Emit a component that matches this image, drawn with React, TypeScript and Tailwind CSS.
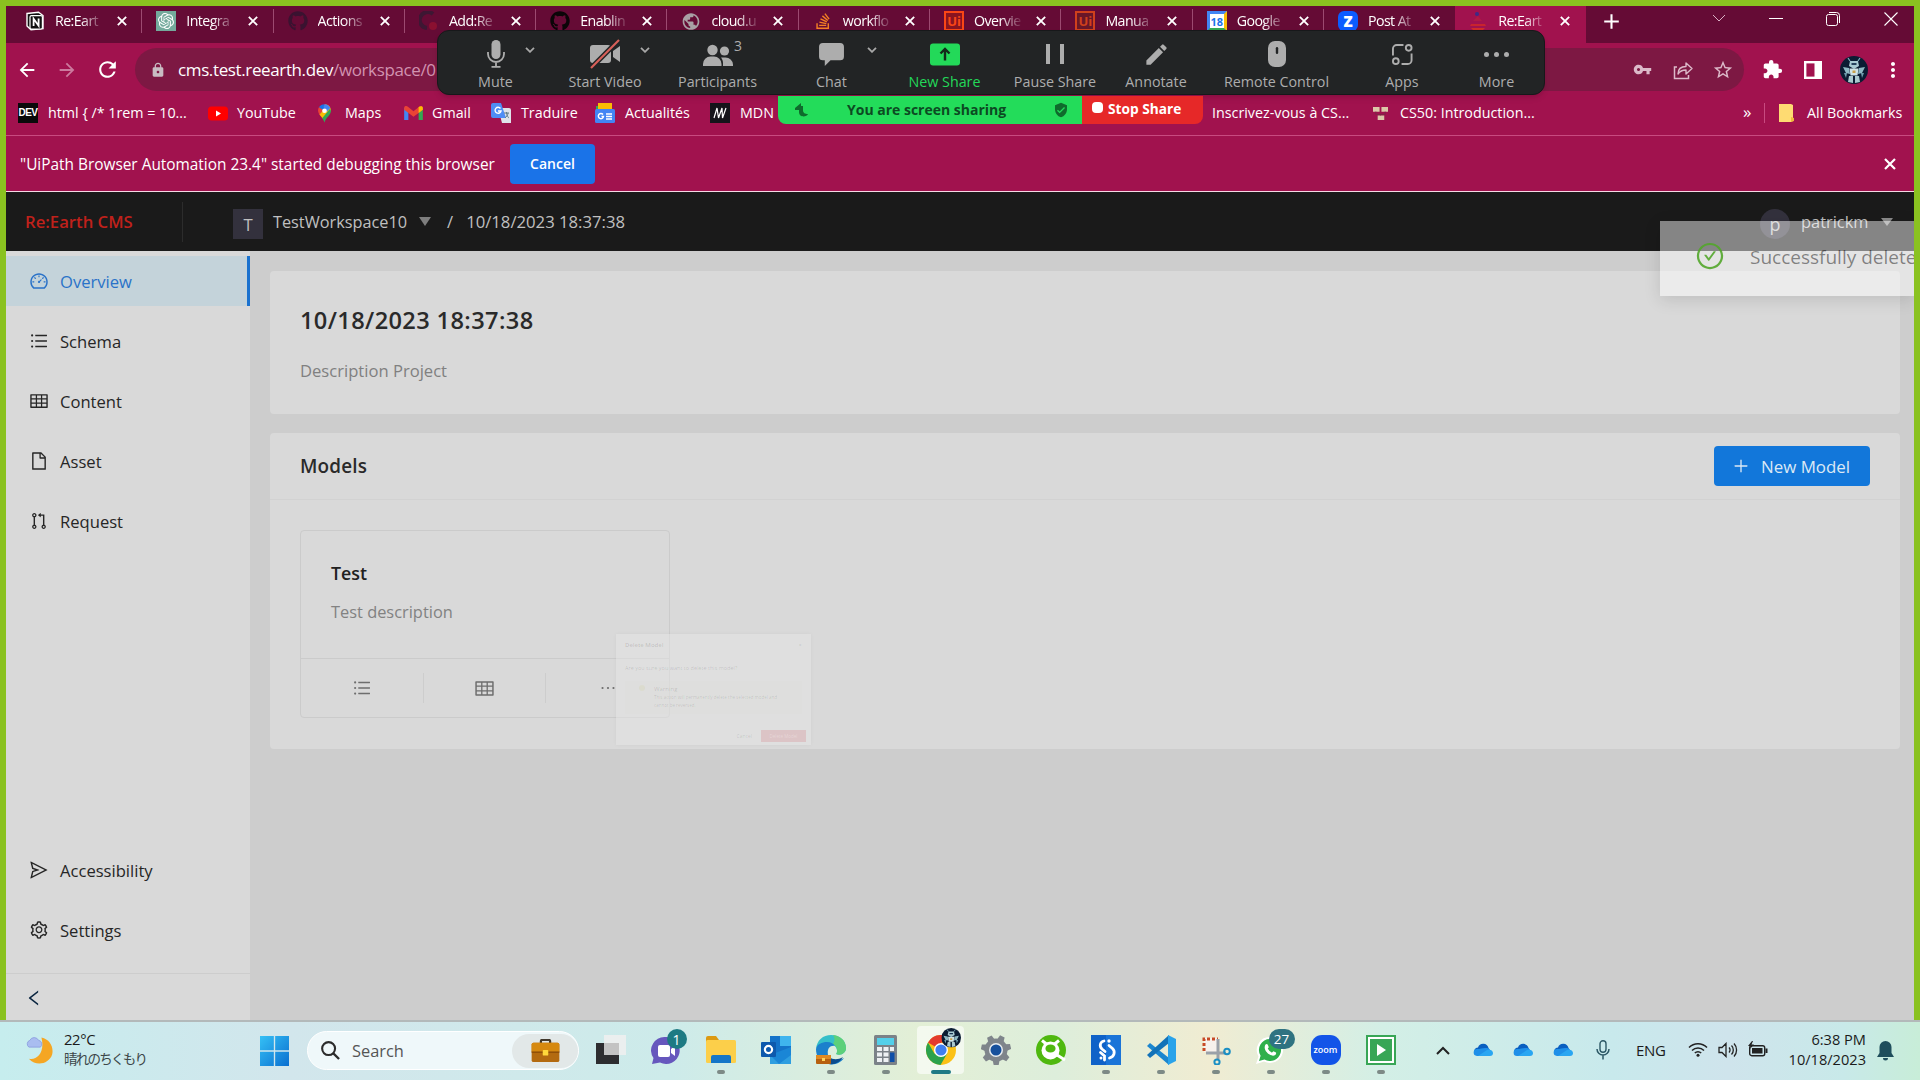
import React from "react";
import {
  AiOutlineDashboard,
  AiOutlineUnorderedList,
  AiOutlineTable,
  AiOutlineFile,
  AiOutlinePullRequest,
  AiOutlineSend,
  AiOutlineSetting,
  AiOutlinePlus,
  AiOutlineLeft,
  AiOutlineEllipsis,
  AiOutlineCheckCircle,
} from "react-icons/ai";
import { FaGithub, FaStackOverflow } from "react-icons/fa";
import { SiOpenai } from "react-icons/si";
import {
  MdArrowBack,
  MdArrowForward,
  MdRefresh,
  MdLock,
  MdVpnKey,
  MdExtension,
  MdMoreVert,
  MdStarBorder,
  MdPublic,
  MdAdd,
  MdEdit,
  MdVerifiedUser,
} from "react-icons/md";

/* ---------- tab strip ---------- */

const Cross = ({ className }: { className: string }) => (
  <svg viewBox="0 0 12 12" className={"shrink-0 " + className}>
    <path d="M1 1l10 10M11 1 1 11" stroke="#fff" strokeWidth="2.2" />
  </svg>
);

const NotionMark = () => (
  <svg viewBox="0 0 20 20" className="size-5">
    <path d="M2 2.5 13.5 1.2 18 4.5v13L6 18.8 2 15z" fill="#111" stroke="#fff" strokeWidth="1.4" />
    <rect x="5" y="4.6" width="12.4" height="13.4" rx="1.5" fill="#111" stroke="#fff" strokeWidth="1.2" />
    <path d="M8.6 15V7.8l5 7V7.6" fill="none" stroke="#fff" strokeWidth="1.8" />
  </svg>
);

const UiPathMark = ({ dim = false }: { dim?: boolean }) => (
  <div
    className={
      dim
        ? "flex size-5 items-center justify-center border-2 border-[#d0401c] bg-[#6a1628] text-[13px] leading-none font-bold text-[#d0401c]"
        : "flex size-5 items-center justify-center border-2 border-[#fa4616] bg-[#8b1420] text-[13px] leading-none font-bold text-[#fa4616]"
    }
  >
    Ui
  </div>
);

const CalendarMark = () => (
  <div className="flex size-5 items-center justify-center border-x-[3px] border-y-[3px] border-t-[#4285f4] border-r-[#fbbc04] border-b-[#34a853] border-l-[#4285f4] bg-white text-[11px] leading-none font-bold text-[#1a73e8]">
    18
  </div>
);

const EarthMark = () => (
  <svg viewBox="0 0 20 20" className="size-5">
    <circle cx="9" cy="3" r="2" fill="#3d2a86" />
    <path d="M5 10 10 5l4 5z" fill="#b01a45" />
    <path d="M3 13h14l1 2H2z" fill="#c8242e" />
    <path d="M3 17h14l-2 2H5z" fill="#d02c28" />
  </svg>
);

const tabs: { title: string; icon: React.ReactNode }[] = [
  { title: "Re:Eart", icon: <NotionMark /> },
  {
    title: "Integra",
    icon: (
      <div className="flex size-5 items-center justify-center bg-[#74aa9c] text-white">
        <SiOpenai size={16} />
      </div>
    ),
  },
  { title: "Actions", icon: <FaGithub size={20} color="#3a1230" /> },
  {
    title: "Add:Re",
    icon: (
      <svg viewBox="0 0 20 20" className="size-5">
        <path d="M14 3A8 8 0 1 0 8 17" fill="none" stroke="#3d1733" strokeWidth="4" />
        <circle cx="14" cy="15" r="4" fill="#8a1030" />
      </svg>
    ),
  },
  { title: "Enablin", icon: <FaGithub size={20} color="#0b0508" /> },
  { title: "cloud.u", icon: <MdPublic size={21} color="#a9a0a5" /> },
  { title: "workflo", icon: <FaStackOverflow size={18} color="#f48024" /> },
  { title: "Overvie", icon: <UiPathMark /> },
  { title: "Manua", icon: <UiPathMark dim /> },
  { title: "Google", icon: <CalendarMark /> },
  {
    title: "Post At",
    icon: (
      <div className="flex size-5 items-center justify-center rounded-md bg-[#0b5cff] text-[15px] leading-none font-extrabold text-white">
        Z
      </div>
    ),
  },
  { title: "Re:Eart", icon: <EarthMark /> },
];

function TabStrip() {
  return (
    <div className="flex h-[37px] bg-[#650b35]">
      <div className="w-[5px]" />
      {tabs.map((t, i) => (
        <div
          key={i}
          className={
            i === 11
              ? "flex h-[37px] w-[131px] shrink-0 items-center bg-[#a1124e] pb-[7px] pl-[13px]"
              : "flex h-[37px] w-[131.3px] shrink-0 items-center pb-[7px] pl-[14px]"
          }
        >
          <div className="flex w-5 shrink-0 justify-center">{t.icon}</div>
          <div className="ml-[10px] w-[47px] shrink-0 text-[14.200px] tracking-[-0.04em] whitespace-nowrap text-white [mask-image:linear-gradient(to_right,black_55%,rgba(0,0,0,0.1))]">
            {t.title}
          </div>
          <Cross className="ml-[15px] size-[10px]" />
          {i < 10 && <div className="ml-auto h-6 w-px bg-[#9c4a70]" />}
        </div>
      ))}
      <div className="flex grow items-start rounded-bl-lg bg-[#650b35] text-white">
        <MdAdd size={25} className="mt-[3px] ml-[13px]" />
        <svg viewBox="0 0 12 12" className="mt-[6px] ml-[88px] h-3 w-[14px]">
          <path d="M0 3l6 6 6-6" fill="none" stroke="#d9b0c4" strokeWidth="1" />
        </svg>
        <div className="mt-3 ml-[43px] h-px w-[14px] bg-white" />
        <svg viewBox="0 0 14 14" className="mt-[6px] ml-[43px] size-[14px]">
          <rect x="0.5" y="2.5" width="11" height="11" rx="2" fill="none" stroke="#fff" />
          <path d="M3 .5h7.500a3 3 0 0 1 3 3V11" fill="none" stroke="#fff" />
        </svg>
        <svg viewBox="0 0 14 14" className="mt-[6px] ml-[44px] size-[14px]">
          <path d="M.5.5l13 13M13.5.5l-13 13" stroke="#fff" strokeWidth="1.1" />
        </svg>
      </div>
    </div>
  );
}

/* ---------- address row ---------- */

const AvatarBot = () => (
  <svg viewBox="0 0 28 28" className="size-7">
    <circle cx="14" cy="14" r="14" fill="#0b1c33" />
    <path d="M10 5h8l1 5-5 3-5-3z" fill="#a9cbd3" />
    <path d="M3 11l6 1 1 6-4-1zM25 11l-6 1-1 6 4-1z" fill="#8fb9c4" />
    <path d="M4 17l3 0-1 5zM24 17l-3 0 1 5z" fill="#6f9cab" />
    <path d="M9.500 12.500h9l-1 7h-7z" fill="#cfe3e6" />
    <path d="M9 20l4 0v7l-5-1zM19 20l-4 0v7l5-1z" fill="#a9c8ce" />
    <path d="M12.500 14.500h3v2.500h-3z" fill="#c8a04a" />
    <path d="M11.500 8h5" stroke="#17314f" strokeWidth="1.800" />
    <path d="M10 5 8 2M18 5l2-3" stroke="#7fb0c0" strokeWidth="1.200" />
  </svg>
);

function AddressRow() {
  return (
    <div className="flex h-[53px] items-center bg-[#a1124e] text-white">
      <MdArrowBack size={22} className="ml-[10px]" />
      <MdArrowForward size={22} className="ml-[18px] text-[#cc7a9e]" />
      <MdRefresh size={25} className="ml-[17px]" />
      <div className="ml-[15px] flex h-[43px] w-[1609px] items-center rounded-full bg-[#7d1843]">
        <MdLock size={16} className="ml-[15px] text-[#c9bcc3]" />
        <div className="ml-3 text-[17px] tracking-[-0.022em] whitespace-nowrap">
          cms.test.reearth.dev<span className="text-[#d193b0]">/workspace/0</span>
        </div>
        <div className="ml-auto flex items-center text-[#dcb9c9]">
          <MdVpnKey size={19} />
          <svg viewBox="0 0 20 20" className="ml-[21px] size-5">
            <path d="M4 7H1.500v11.500h14V15" fill="none" stroke="currentColor" strokeWidth="1.500" />
            <path d="M5 14c0-5 3-7.500 8-7.500V3l6 5.500-6 5.500v-4c-4 0-6 1-8 4z" fill="none" stroke="currentColor" strokeWidth="1.400" strokeLinejoin="round" />
          </svg>
          <MdStarBorder size={22} className="mr-[10px] ml-[19px]" />
        </div>
      </div>
      <MdExtension size={21} className="ml-[18px]" />
      <svg viewBox="0 0 18 18" className="ml-[21px] size-[18px]">
        <rect x="1.200" y="1.200" width="15.600" height="15.600" fill="none" stroke="#fff" strokeWidth="2.400" />
        <rect x="10.500" y="1" width="6.500" height="16" fill="#fff" />
      </svg>
      <div className="ml-[18px]">
        <AvatarBot />
      </div>
      <MdMoreVert size={24} className="ml-[13px]" />
    </div>
  );
}

/* ---------- bookmarks ---------- */

const PinMark = () => (
  <svg viewBox="0 0 14 20" className="h-[19px] w-[13px]">
    <path d="M7 0a7 7 0 0 0-6 3.300L7 9z" fill="#1a73e8" />
    <path d="M1 3.300C-.5 6 0 9 1.500 11L6 6.500z" fill="#ea4335" />
    <path d="M7 0c4 0 7 3 7 7l-9 8.500L1.500 11 9 3z" fill="#fbbc04" />
    <path d="M14 7c0 5-6 7-7 13-.5-2-1.300-3.500-2.500-5L13 5z" fill="#34a853" />
    <path d="M7 0c3 0 5 1.500 6.300 4L9.500 8 6 3z" fill="#4285f4" />
    <circle cx="7" cy="7" r="2.500" fill="#fff" />
  </svg>
);

const GmailMark = () => (
  <svg viewBox="0 0 20 15" className="h-[14px] w-[19px]">
    <path d="M0 2v13h4.500V5z" fill="#4285f4" />
    <path d="M20 2v13h-4.500V5z" fill="#34a853" />
    <path d="M0 2C0 0 2.500-.5 4 .8l6 4.700 6-4.700C17.500-.5 20 0 20 2v2l-10 7.500L0 4z" fill="#ea4335" />
    <path d="M15.500 1.200C17.500-.5 20 0 20 2v2l-4.500 3.400z" fill="#fbbc04" />
  </svg>
);

const TranslateMark = () => (
  <svg viewBox="0 0 20 20" className="size-5">
    <path d="M7 5h11a2 2 0 0 1 2 2v13h-9z" fill="#dfe3ea" />
    <path d="M2 0h8l5 15H2a2 2 0 0 1-2-2V2a2 2 0 0 1 2-2z" fill="#4f8df5" />
    <path d="M9.500 5.500A3 3 0 1 0 10 8H7" fill="none" stroke="#fff" strokeWidth="1.400" />
    <path d="M13 10h5M15.500 9v1c0 2 2 5 2.500 5M17 10c0 2-2 4-3 5" fill="none" stroke="#607d8b" />
  </svg>
);

const NewsMark = () => (
  <svg viewBox="0 0 20 20" className="size-5">
    <path d="M1 3h14l3 4H1z" fill="#34a853" />
    <path d="M3 0h14v9H3z" fill="#fbbc04" />
    <rect y="6" width="20" height="14" rx="1.500" fill="#4285f4" />
    <path d="M8 11.500A2.600 2.600 0 1 0 8.500 13.500H6.500" fill="none" stroke="#fff" strokeWidth="1.400" />
    <path d="M11 11h6M11 13.500h6M11 16h6" stroke="#fff" strokeWidth="1.300" />
  </svg>
);

function Bookmark({ icon, label, className }: { icon: React.ReactNode; label: string; className: string }) {
  return (
    <div className={"flex shrink-0 items-center whitespace-nowrap " + className}>
      {icon}
      <span>{label}</span>
    </div>
  );
}

function BookmarkBar() {
  return (
    <div className="flex h-[40px] items-center border-b border-[#c84a80] bg-[#a1124e] pb-[5px] text-[14.300px] text-white">
      <Bookmark
        className="ml-3 w-[190px] gap-[10px]"
        icon={
          <div className="flex h-[20px] w-5 items-center justify-center bg-[#0a0a0a] font-['Liberation_Sans'] text-[10px] leading-none font-bold tracking-tighter">
            DEV
          </div>
        }
        label="html { /* 1rem = 10..."
      />
      <Bookmark
        className="w-[110px] gap-[9px]"
        icon={
          <svg viewBox="0 0 20 14" className="h-[15px] w-5">
            <rect width="20" height="14" rx="3.500" fill="#f00" />
            <path d="M8 4v6l5-3z" fill="#fff" />
          </svg>
        }
        label="YouTube"
      />
      <Bookmark className="w-[86px] gap-[14px]" icon={<PinMark />} label="Maps" />
      <Bookmark className="w-[87px] gap-[9px]" icon={<GmailMark />} label="Gmail" />
      <Bookmark className="w-[104px] gap-[10px]" icon={<TranslateMark />} label="Traduire" />
      <Bookmark className="w-[115px] gap-[10px]" icon={<NewsMark />} label="Actualités" />
      <Bookmark
        className="w-[502px] gap-[10px]"
        icon={
          <svg viewBox="0 0 20 20" className="size-5">
            <rect width="20" height="20" fill="#15141a" />
            <path d="M4 15 7 5l1.500 10L12 5l.5 10L16 5" fill="none" stroke="#fff" strokeWidth="1.200" />
          </svg>
        }
        label="MDN"
      />
      <Bookmark className="w-[161px]" icon={null} label="Inscrivez-vous à CS..." />
      <Bookmark
        className="w-[370px] gap-[12px]"
        icon={
          <svg viewBox="0 0 16 16" className="size-[15px]">
            <path d="M0 1h7v5H0zM9 1h7v5H9zM5 10h7v5H5z" fill="#dcc8a8" />
            <path d="M3 6v3h10V6M8 9v1" fill="none" stroke="#7b2a45" />
          </svg>
        }
        label="CS50: Introduction..."
      />
      <span className="w-[21px] pb-[3px] text-[17px]">»</span>
      <div className="h-5 w-px bg-[#c84a80]" />
      <Bookmark
        className="ml-[14px] gap-[13px]"
        icon={
          <svg viewBox="0 0 15 18" className="h-[18px] w-[15px]">
            <path d="M0 0h12v0l2 1v16l-2 1H0z" fill="#fedb72" />
            <path d="M12 13l3 1v3l-3 1z" fill="#f0b93c" />
          </svg>
        }
        label="All Bookmarks"
      />
    </div>
  );
}

function InfoBar() {
  return (
    <div className="flex h-[56px] items-center border-b border-[#f4d9e4] bg-[#a1124e] text-white">
      <span className="mt-[2px] ml-[14px] w-[490px] text-[15.400px] whitespace-nowrap">
        "UiPath Browser Automation 23.4" started debugging this browser
      </span>
      <div className="flex h-10 w-[85px] items-center justify-center rounded bg-[#1a73e8] text-[14px] font-semibold">
        Cancel
      </div>
      <Cross className="mr-[18px] ml-auto size-[12px]" />
    </div>
  );
}

/* ---------- conference toolbar ---------- */

const Caret = ({ className }: { className: string }) => (
  <svg viewBox="0 0 10 6" className={"absolute top-[16px] h-[6px] w-[10px] " + className}>
    <path d="M1 .8l4 4 4-4" fill="none" stroke="#a8a8a8" strokeWidth="1.800" />
  </svg>
);

const g = "#adadad";

function MeetingItem({
  label,
  icon,
  className,
  children,
}: {
  label: string;
  icon: React.ReactNode;
  className: string;
  children?: React.ReactNode;
}) {
  return (
    <div className={"relative flex shrink-0 flex-col items-center whitespace-nowrap " + className}>
      <div className="flex h-[46px] items-center justify-center">{icon}</div>
      <div className="-mt-[5px] text-[14.300px] leading-5">{label}</div>
      {children}
    </div>
  );
}

function MeetingToolbar() {
  return (
    <div className="absolute top-[30px] left-[437px] flex h-[65px] w-[1108px] rounded-xl border border-[#17181a] bg-[#222425] text-[#adadad] shadow-md">
      <MeetingItem
        className="w-[115px]"
        label="Mute"
        icon={
          <svg viewBox="0 0 18 28" className="h-7 w-[18px]">
            <rect x="4.500" width="9" height="19" rx="4.500" fill={g} />
            <path d="M1 12v2a8 8 0 0 0 16 0v-2M9 22v4M4.500 26.800h9" fill="none" stroke={g} strokeWidth="1.800" />
          </svg>
        }
      >
        <Caret className="left-[87px]" />
      </MeetingItem>
      <MeetingItem
        className="w-[104px]"
        label="Start Video"
        icon={
          <svg viewBox="0 0 32 30" className="h-[30px] w-8">
            <rect x="1" y="6" width="21" height="18" rx="3" fill={g} />
            <path d="M24 12l7-5v16l-7-5z" fill={g} />
            <path d="M2 29 30 1" stroke="#222425" strokeWidth="5" />
            <path d="M2 29 30 1" stroke="#d8605a" strokeWidth="2.200" />
          </svg>
        }
      >
        <Caret className="left-[87px]" />
      </MeetingItem>
      <MeetingItem
        className="w-[121px]"
        label="Participants"
        icon={
          <svg viewBox="0 0 30 23" className="mt-[2px] h-[23px] w-[30px]">
            <circle cx="9.500" cy="6" r="5.200" fill={g} />
            <path d="M0 22v-2a7.500 7.500 0 0 1 7.500-7.500h3.500a7.500 7.500 0 0 1 7.500 7.500v2z" fill={g} />
            <circle cx="21.500" cy="7" r="4.600" fill={g} />
            <path d="M20 22v-3c0-2-.8-4-2-5.500h4.500a7.500 7.500 0 0 1 7.500 7v1.500z" fill={g} />
          </svg>
        }
      >
        <span className="absolute top-[4px] left-[77px] text-[14px]">3</span>
      </MeetingItem>
      <MeetingItem
        className="w-[107px]"
        label="Chat"
        icon={
          <svg viewBox="0 0 26 24" className="h-[23px] w-[25px]">
            <path d="M4 0h18a4 4 0 0 1 4 4v10a4 4 0 0 1-4 4H12l-6 6v-6H4a4 4 0 0 1-4-4V4a4 4 0 0 1 4-4z" fill={g} />
          </svg>
        }
      >
        <Caret className="left-[89px]" />
      </MeetingItem>
      <MeetingItem
        className="w-[119px] text-[#23d959]"
        label="New Share"
        icon={
          <svg viewBox="0 0 30 22" className="h-[23px] w-[30px]">
            <rect width="30" height="22" rx="3" fill="#23d959" />
            <path d="M15 17V6M10.500 10 15 5.500l4.500 4.500" fill="none" stroke="#13291a" strokeWidth="2.400" />
          </svg>
        }
      />
      <MeetingItem
        className="w-[102px]"
        label="Pause Share"
        icon={<div className="h-5 w-[18px] border-x-[4px] border-[#adadad]" />}
      />
      <MeetingItem className="w-[100px]" label="Annotate" icon={<MdEdit size={27} color={g} />} />
      <MeetingItem
        className="w-[141px]"
        label="Remote Control"
        icon={
          <svg viewBox="0 0 18 26" className="h-[26px] w-[18px]">
            <rect width="18" height="26" rx="7" fill={g} />
            <rect x="7.800" y="6" width="2.400" height="7" rx="1.200" fill="#222425" />
          </svg>
        }
      />
      <MeetingItem
        className="w-[110px]"
        label="Apps"
        icon={
          <svg viewBox="0 0 22 22" className="mt-px size-[21px]">
            <g fill="none" stroke={g} strokeWidth="2">
              <circle cx="17.500" cy="4" r="3" />
              <circle cx="4" cy="18" r="3" />
              <path d="M1 12V5a4 4 0 0 1 4-4h7M20.500 10v7a4 4 0 0 1-4 4H10" />
            </g>
          </svg>
        }
      />
      <MeetingItem
        className="w-[79px]"
        label="More"
        icon={
          <div className="flex gap-[5px]">
            <i className="size-[5px] rounded-full bg-[#adadad]" />
            <i className="size-[5px] rounded-full bg-[#adadad]" />
            <i className="size-[5px] rounded-full bg-[#adadad]" />
          </div>
        }
      />
    </div>
  );
}

function ShareBanner() {
  return (
    <div className="absolute top-[96px] left-[778px] flex h-7 overflow-hidden rounded-b-lg text-[14px] font-bold">
      <div className="flex w-[304px] items-center bg-[#23dc5a] text-[#0c4a22]">
        <svg viewBox="0 0 14 14" className="ml-[17px] size-[14px]">
          <path d="M0 5l6-5v3h2v4c0 3 2 4 5 4-1 3-9 4-9-2V7H0z" fill="#0f6b2c" />
        </svg>
        <span className="mb-[2px] ml-[38px] w-[206px] whitespace-nowrap">You are screen sharing</span>
        <MdVerifiedUser size={16} color="#0f6b2c" />
      </div>
      <div className="flex w-[121px] items-center bg-[#e62828] text-white">
        <div className="mb-[6px] ml-[10px] size-[11px] rounded-sm bg-white" />
        <span className="mb-[1px] ml-[5px] text-[13.700px] whitespace-nowrap">Stop Share</span>
      </div>
    </div>
  );
}

/* ---------- CMS page ---------- */

function CmsHeader() {
  return (
    <div className="flex h-[59px] shrink-0 items-center bg-[#1a1a1a] text-[16.700px] text-[#c0c0c0]">
      <span className="mt-px ml-[19px] w-[157px] text-[16.700px] font-semibold whitespace-nowrap text-[#c0211b]">
        Re:Earth CMS
      </span>
      <div className="h-10 w-px bg-[#2c2c2c]" />
      <div className="mt-[4px] ml-[50px] flex h-[30px] w-[30px] items-center justify-center bg-[#33313d] pt-[2px]">T</div>
      <span className="mt-px ml-[10px] w-[146px] text-[16.300px] whitespace-nowrap">TestWorkspace10</span>
      <div className="size-0 border-x-[6px] border-t-[9px] border-x-transparent border-t-[#7e7e7e]" />
      <span className="mt-px ml-4">/</span>
      <span className="mt-px ml-[13px] whitespace-nowrap">10/18/2023 18:37:38</span>
      <div className="mt-[4px] ml-auto flex size-[30px] items-center justify-center rounded-full bg-[#33313d] pt-[2px] text-[18px]">
        p
      </div>
      <span className="mt-px ml-[11px] w-[80px] text-[16.400px]">patrickm</span>
      <div className="mr-[21px] size-0 border-x-[6px] border-t-[8px] border-x-transparent border-t-[#8a8a8a]" />
    </div>
  );
}

function MenuItem({ icon, label, active = false }: { icon: React.ReactNode; label: string; active?: boolean }) {
  return (
    <div
      className={
        active
          ? "mb-[10px] flex h-[50px] items-center gap-[11px] border-r-[3px] border-[#1a72cf] bg-[#c4d3da] pl-[23px] text-[#2a72c8]"
          : "mb-[10px] flex h-[50px] items-center gap-[11px] pl-[23px] text-[#262626]"
      }
    >
      {icon}
      <span className="mt-[2px]">{label}</span>
    </div>
  );
}

function Sidebar() {
  return (
    <div className="flex w-[244px] shrink-0 flex-col bg-[#d9d9d9] pt-[5px] text-[16.600px]">
      <MenuItem active icon={<AiOutlineDashboard size={20} />} label="Overview" />
      <MenuItem icon={<AiOutlineUnorderedList size={20} />} label="Schema" />
      <MenuItem icon={<AiOutlineTable size={20} />} label="Content" />
      <MenuItem icon={<AiOutlineFile size={20} />} label="Asset" />
      <MenuItem icon={<AiOutlinePullRequest size={20} />} label="Request" />
      <div className="mt-auto">
        <MenuItem icon={<AiOutlineSend size={20} />} label="Accessibility" />
        <MenuItem icon={<AiOutlineSetting size={20} />} label="Settings" />
      </div>
      <div className="mt-[8px] flex h-[47px] items-center border-t border-[#cdcdcd] pt-px pl-[18px] text-[#0a2540]">
        <AiOutlineLeft size={20} />
      </div>
    </div>
  );
}

/* Confirmation dialog caught while shrinking away */
function ClosingDialog() {
  return (
    <div className="absolute top-[634px] left-[616px] flex h-[111px] w-[195px] flex-col bg-[#e4e4e4]/55 px-[9px] pt-[7px] text-[6px] leading-[8px] text-black/15 shadow-[0_0_4px_rgba(0,0,0,0.04)]">
      <div className="flex justify-between font-semibold">
        <span>Delete Model</span>
        <span className="font-normal">×</span>
      </div>
      <div className="mt-[15px] whitespace-nowrap text-[5.500px]">Are you sure you want to delete this model?</div>
      <div className="mt-[9px] flex h-[33px] gap-[9px] bg-[#dcdcda]/40 px-[14px] pt-[4px]">
        <i className="size-[6px] rounded-full bg-[#d8d6b8]/40" />
        <div>
          <div>Warning</div>
          <div className="text-[4.500px] whitespace-nowrap">This action will permanently delete the selected model and</div>
          <div className="text-[4.500px]">cannot be reversed.</div>
        </div>
      </div>
      <div className="mt-auto mb-[3px] -mr-[4px] flex items-center justify-end gap-[9px]">
        <span className="text-[5px]">Cancel</span>
        <div className="flex h-[12px] w-[45px] items-center justify-center bg-[#dcc4c6] text-[4.500px] text-white/30">
          Delete Model
        </div>
      </div>
    </div>
  );
}

function Toast() {
  return (
    <div className="absolute top-[221px] left-[1660px] flex h-[75px] w-[254px] bg-white/47 pt-[20px] pl-[35px] shadow-[0_4px_16px_rgba(0,0,0,0.12)] [clip-path:inset(-20px_0_-20px_-20px)]">
      <AiOutlineCheckCircle size={30} className="shrink-0 text-[#52a62a]/90" />
      <span className="ml-[25px] text-[19px] leading-[32px] whitespace-nowrap text-black/45">Successfully delete</span>
    </div>
  );
}

function Overview() {
  return (
    <div className="flex grow flex-col gap-[19px] bg-[#cdcdcd] pt-5 pr-[14px] pl-5">
      <div className="h-[143px] rounded-sm bg-[#d9d9d9] pt-[30px] pl-[30px]">
        <div className="text-[23.600px] leading-[38px] font-semibold tracking-[0.016em] text-[#2a2a2a]">10/18/2023 18:37:38</div>
        <div className="mt-[19px] text-[16.600px] leading-[26px] text-[#808080]">Description Project</div>
      </div>
      <div className="h-[316px] rounded-sm bg-[#d9d9d9]">
        <div className="flex h-[67px] items-center border-b border-[#d2d2d2] pr-[30px] pl-[30px]">
          <span className="text-[18.900px] font-semibold tracking-[0.01em] text-[#2a2a2a]">Models</span>
          <div className="ml-auto flex h-10 w-[156px] items-center rounded-sm bg-[#1277da] pl-[18px] text-[16.900px] text-[#dce9f5]">
            <AiOutlinePlus size={18} />
            <span className="mt-px ml-[11px] whitespace-nowrap">New Model</span>
          </div>
        </div>
        <div className="mt-[30px] ml-[30px] flex h-[188px] w-[370px] flex-col rounded-sm border border-[#cbcbcb]">
          <div className="h-[127px] pt-[28px] pl-[30px]">
            <div className="text-[17.800px] leading-[28px] font-semibold text-[#202020]">Test</div>
            <div className="mt-[12px] text-[16.400px] leading-[26px] text-[#828282]">Test description</div>
          </div>
          <div className="flex grow items-center border-t border-[#cbcbcb] text-[#6e6e6e]">
            <div className="flex h-[30px] w-[123px] items-center justify-center border-r border-[#cdcdcd]">
              <AiOutlineUnorderedList size={20} />
            </div>
            <div className="flex h-[30px] w-[122px] items-center justify-center border-r border-[#cdcdcd]">
              <AiOutlineTable size={21} />
            </div>
            <div className="flex h-[30px] grow items-center justify-center">
              <AiOutlineEllipsis size={20} />
            </div>
          </div>
        </div>
      </div>
    </div>
  );
}

/* ---------- taskbar ---------- */

function TaskbarApp({ children, dot = false, active = false }: { children: React.ReactNode; dot?: boolean; active?: boolean }) {
  return (
    <div className="relative flex h-[58px] w-[55px] shrink-0 items-center justify-center">
      {active && <div className="absolute top-[4px] h-[48px] w-[47px] rounded bg-white/60" />}
      <div className="relative mb-[2px] flex size-[30px] items-center justify-center">{children}</div>
      {active && <div className="absolute bottom-[6px] h-1 w-5 rounded-full bg-[#1f7a85]" />}
      {dot && <div className="absolute bottom-[6px] h-1 w-2 rounded-full bg-[#7d8a86]" />}
    </div>
  );
}

const Cloud = () => (
  <svg viewBox="0 0 20 13" className="h-[13px] w-5">
    <path d="M5 4.500a5.500 5.500 0 0 1 10.500.5L17 8 5 11H2A4 4 0 0 1 5 4.500z" fill="#0a5fc0" />
    <path d="M4 13a3.500 3.500 0 0 1 .3-7c3 0 6-1.500 9-1A4.400 4.400 0 0 1 16 13z" fill="#1f8fe8" />
    <path d="M5 13l9-6c3-.8 6 .5 6 3a3 3 0 0 1-3 3z" fill="#2aa6f2" />
  </svg>
);

const Briefcase = () => (
  <svg viewBox="0 0 30 26" className="h-[24px] w-[29px]">
    <path d="M10 5V2.500A1.500 1.500 0 0 1 11.500 1h7A1.500 1.500 0 0 1 20 2.500V5" fill="none" stroke="#41382c" strokeWidth="2.400" />
    <rect y="4" width="30" height="21" rx="2" fill="#b36a10" />
    <path d="M0 6a2 2 0 0 1 2-2h26a2 2 0 0 1 2 2v8H0z" fill="#d68910" />
    <rect y="13.500" width="30" height="1.500" fill="#8a4a08" />
    <rect x="12" y="12" width="6" height="6" rx="1" fill="#ffd83c" />
  </svg>
);

const gearTeeth = [0, 51.43, 102.86, 154.29, 205.71, 257.14, 308.57];

function Taskbar() {
  return (
    <div className="flex h-[60px] w-full items-center border-t-2 border-[#b3b9ba] bg-[linear-gradient(90deg,#c6edee_0%,#d2e6ec_15%,#cdebea_35%,#e3efd6_48%,#ddeedb_55%,#f0ecd2_63%,#d3efe6_72%,#c8e9ec_84%,#cfe4ec_90%,#c8e9e9_96%,#c8edd8_100%)] text-[#1b1b1b]">
      <svg viewBox="0 0 30 34" className="mb-[3px] ml-[25px] h-[34px] w-[29px]">
        <path d="M17 4c9 2 13 10 11 18-3 9-16 13-24 4 8 2 17-6 13-22z" fill="#f5a623" />
        <path d="M4 14a4 4 0 0 1 1-7 5 5 0 0 1 9 0 4 4 0 0 1 2 7z" fill="#a9bdf0" stroke="#8fa2e0" />
      </svg>
      <div className="mb-[4px] ml-[10px] w-[196px] text-[14.800px] leading-[19px]">
        <div className="tracking-tight">22°C</div>
        <div className="font-['Noto_Sans_CJK_JP'] text-[13.500px] tracking-[-0.13em] whitespace-nowrap text-[#3c4648]">晴れのちくもり</div>
      </div>
      <svg viewBox="0 0 30 30" className="h-[30px] w-[29px]" preserveAspectRatio="none">
        <defs>
          <linearGradient id="win" x1="0" y1="0" x2="1" y2="1">
            <stop offset="0" stopColor="#35c0f5" />
            <stop offset="1" stopColor="#0a6fd0" />
          </linearGradient>
        </defs>
        <path d="M0 0h14.300v14.300H0zM15.700 0H30v14.300H15.700zM0 15.700h14.300V30H0zM15.700 15.700H30V30H15.700z" fill="url(#win)" />
      </svg>
      <div className="mb-px ml-[18px] flex h-[39px] w-[272px] items-center rounded-full border border-white bg-[#eff8fa]">
        <svg viewBox="0 0 20 20" className="ml-[13px] size-[19px]">
          <circle cx="8" cy="8" r="6.800" fill="none" stroke="#2b2b2b" strokeWidth="2.200" />
          <path d="M13 13l6 6" stroke="#2b2b2b" strokeWidth="2.400" />
        </svg>
        <span className="mt-px ml-[12px] text-[16.400px] text-[#555]">Search</span>
        <div className="ml-auto flex h-[34px] w-[66px] items-center justify-center rounded-full bg-[#e2e8e8]">
          <Briefcase />
        </div>
      </div>
      <div className="w-[4px]" />
      <TaskbarApp>
        <svg viewBox="0 0 30 30" className="size-[30px]">
          <rect x="0" y="8" width="23" height="21" fill="#2d2d30" />
          <rect x="8" y="0" width="22" height="20" fill="#f0f0f0" fillOpacity=".85" />
          <rect x="8" y="8" width="15" height="12" fill="#c3c3c3" />
        </svg>
      </TaskbarApp>
      <TaskbarApp>
        <svg viewBox="0 0 30 30" className="size-[30px]">
          <path d="M15 2a13.500 13.500 0 1 1-6 25.500L1 29l1.500-6A13.500 13.500 0 0 1 15 2z" fill="#6657bd" />
          <rect x="7" y="10" width="12" height="12" rx="2" fill="#fff" />
          <path d="M20 14l4-3v10l-4-3z" fill="#fff" />
        </svg>
        <div className="absolute -top-[6px] -right-[6px] flex size-5 items-center justify-center rounded-full bg-[#1d7a83] text-[14px] text-white">1</div>
      </TaskbarApp>
      <TaskbarApp dot>
        <svg viewBox="0 0 30 30" className="size-[30px]">
          <path d="M0 3a2 2 0 0 1 2-2h8l3 4h4v5H0z" fill="#dc9a12" />
          <rect y="5" width="30" height="23" rx="1.500" fill="#fccf4a" />
          <path d="M5 22a2 2 0 0 1 2-2h16a2 2 0 0 1 2 2v6H5z" fill="#1576c8" />
        </svg>
      </TaskbarApp>
      <TaskbarApp>
        <svg viewBox="0 0 30 30" className="size-[30px]">
          <rect x="9" y="1" width="21" height="28" fill="#1473c9" />
          <rect x="19" y="1" width="11" height="10" fill="#3fb4ee" />
          <rect x="9" y="19" width="21" height="10" fill="#2e9ee0" />
          <path d="M9 20l21-8v8l-12 9z" fill="#1a86d6" />
          <rect x="0" y="7" width="15" height="15" rx="1" fill="#0d59ad" />
          <circle cx="7.500" cy="14.500" r="3.600" fill="none" stroke="#fff" strokeWidth="2.200" />
        </svg>
      </TaskbarApp>
      <TaskbarApp dot>
        <svg viewBox="0 0 30 30" className="size-[30px]">
          <path d="M0 14C1 5 7 0 15 0c9 0 15 6 15 13 0 5-5 8-10 6 1-1 1-2 1-4-1-5-6-7-11-6-5 0-9 2-10 5z" fill="#35bfc9" />
          <path d="M17 0c8 1 13 6 13 13 0 5-5 8-10 6 1-1 1-2 1-4 0-3-2-5-4-6 2-3 2-6 0-9z" fill="#5cd07a" />
          <path d="M0 14c1-5 6-7 11-7 4 0 7 2 8 4-6-1-8 4-7 9 2 5 9 7 16 3-4 6-12 8-18 5C3 26 0 21 0 14z" fill="#1b80cc" />
          <path d="M13 22c4 3 9 3 14 0-3 5-8 8-14 7z" fill="#0e4d8f" />
          <rect x="0" y="20" width="15" height="9" rx="1" fill="#b7600f" />
          <path d="M0 20h15v4H0z" fill="#e08a22" />
          <rect x="6" y="23" width="3" height="3" fill="#ffd25a" />
        </svg>
      </TaskbarApp>
      <TaskbarApp dot>
        <svg viewBox="0 0 24 30" className="h-[30px] w-6">
          <rect width="23" height="30" rx="1.500" fill="#7b8288" />
          <rect x="3" y="3" width="17" height="7" fill="#53d0ea" />
          <path d="M3 12h5v4H3zM9.500 12h5v4h-5zM3 17.500h5v4H3zM9.500 17.500h5v4h-5zM3 23h5v4H3zM9.500 23h5v4h-5zM16 12h4v4h-4z" fill="#eef1f3" />
          <path d="M16 17.500h4.500V27H16z" fill="#0f4fa8" />
        </svg>
      </TaskbarApp>
      <TaskbarApp active>
        <svg viewBox="0 0 30 30" className="size-[30px]">
          <circle cx="15" cy="15" r="15" fill="#fbc116" />
          <path d="M15 15 2 7.500A15 15 0 0 1 28 7.500H15z" fill="#e33b2e" />
          <path d="M2 7.500A15 15 0 0 0 14.500 30l7-12L15 15 8.500 18.800z" fill="#2ba24c" />
          <circle cx="15" cy="15" r="7" fill="#fff" />
          <circle cx="15" cy="15" r="5.600" fill="#3f7ff0" />
        </svg>
        <div className="absolute -top-[7px] -right-[5px] scale-[.7] [transform-origin:top_right]">
          <AvatarBot />
        </div>
      </TaskbarApp>
      <TaskbarApp>
        <svg viewBox="0 0 30 30" className="size-[30px]">
          {gearTeeth.map((a) => (
            <path key={a} d="M11.500 5 12.500 0h5l1 5z" fill="#7f858b" transform={`rotate(${a + 25} 15 15)`} />
          ))}
          <circle cx="15" cy="15" r="11.500" fill="#7f858b" />
          <circle cx="15" cy="15" r="7" fill="#e9edf0" />
          <circle cx="15" cy="15" r="5.500" fill="#17509c" />
        </svg>
      </TaskbarApp>
      <TaskbarApp>
        <svg viewBox="0 0 30 30" className="size-[30px]">
          <circle cx="15" cy="15" r="15" fill="#4fb80f" />
          <circle cx="14.500" cy="15.500" r="9" fill="#fff" />
          <path d="M6 5.500l5 4M23 5.500l-5 4M21 20l8 5" stroke="#fff" strokeWidth="3" />
          <path d="M9.500 13a5 3.500 0 0 1 10 0v1a5 3.500 0 0 1-10 0z" fill="#4fb80f" />
        </svg>
      </TaskbarApp>
      <TaskbarApp dot>
        <svg viewBox="0 0 30 30" className="size-[30px]">
          <rect width="30" height="30" fill="#0f62c8" />
          <path d="M15 0h15v30H15z" fill="#1a74d8" />
          <g fill="none" stroke="#fff" strokeWidth="2.800" strokeLinecap="round">
            <path d="M13 6c-4 1-5 5-2 8l3 2.500" />
            <path d="M18 10.500l3.500 3c3 3 2 8-3 9.500" />
            <path d="M9.500 17.500l4 3.500v4" />
          </g>
          <circle cx="18" cy="6" r="1.700" fill="#fff" />
          <circle cx="10" cy="23" r="1.500" fill="#fff" />
        </svg>
      </TaskbarApp>
      <TaskbarApp dot>
        <svg viewBox="0 0 30 30" className="size-[30px]">
          <path d="M1 11l3-3 19 15v7z" fill="#1b86cf" />
          <path d="M1 20l3 3L23 8V0z" fill="#1272b8" />
          <path d="M22 0l8 4v22l-8 4z" fill="#2aa3ea" />
        </svg>
      </TaskbarApp>
      <TaskbarApp dot>
        <svg viewBox="0 0 30 30" className="size-[30px]">
          <rect x="3" y="3" width="15" height="14" fill="#f6f1ec" />
          <path d="M3 16V4h14" fill="none" stroke="#c74a26" strokeWidth="3" strokeDasharray="3 2" />
          <path d="M17 4v20M5 18h20" stroke="#9aa1a8" strokeWidth="3" />
          <circle cx="26" cy="16.500" r="2.800" fill="none" stroke="#1b8fc4" strokeWidth="2" />
          <circle cx="16" cy="27" r="2.600" fill="none" stroke="#1b8fc4" strokeWidth="2" />
        </svg>
      </TaskbarApp>
      <TaskbarApp dot>
        <svg viewBox="0 0 30 30" className="size-[30px]">
          <path d="M14 2a13 13 0 1 1-6 24.500L0 29l2.500-7.500A13 13 0 0 1 14 2z" fill="#fff" />
          <path d="M14 4a11 11 0 1 1-5.500 20.500L3 26l1.600-5.300A11 11 0 0 1 14 4z" fill="#2fb04c" />
          <path d="M9.500 9.500c1-1 2-.5 2.500.7l.8 2-1 1.400c1 2 2.300 3.200 4.200 4l1.500-1.300 2.500 1.200c.6 1.500-1 3.200-3 3.200-4.500-.5-8.500-5-8.300-8.500 0-1 .3-2 .8-2.700z" fill="#fff" />
        </svg>
        <div className="absolute -top-[6px] -right-[9px] flex h-5 w-[26px] items-center justify-center rounded-full bg-[#2f7381] text-[13.500px] text-white">27</div>
      </TaskbarApp>
      <TaskbarApp dot>
        <div className="flex size-[30px] items-center justify-center rounded-[11px] bg-[#1254e8] text-[9px] font-semibold text-white">zoom</div>
      </TaskbarApp>
      <TaskbarApp dot>
        <div className="flex size-[30px] items-center justify-center border-[3px] border-[#38a656] bg-[#38a656] outline-2 -outline-offset-[4px] outline-white">
          <div className="ml-[2px] size-0 border-y-[6px] border-l-[9px] border-y-transparent border-l-white" />
        </div>
      </TaskbarApp>
      <svg viewBox="0 0 14 9" className="mb-[2px] ml-[28px] h-[9px] w-[14px]">
        <path d="M1 8l6-6 6 6" fill="none" stroke="#222" strokeWidth="2" />
      </svg>
      <div className="mb-[3px] ml-[23px] flex gap-5">
        <Cloud />
        <Cloud />
        <Cloud />
      </div>
      <svg viewBox="0 0 14 20" className="mb-[2px] ml-[23px] h-5 w-[14px]">
        <rect x="4" y=".8" width="6" height="11.500" rx="3" fill="none" stroke="#2c5866" strokeWidth="1.400" />
        <path d="M1 9a6 6 0 0 0 12 0M7 15v4.500" fill="none" stroke="#2c5866" strokeWidth="1.500" />
      </svg>
      <span className="mb-px ml-[26px] w-[52px] text-[15px] tracking-tight">ENG</span>
      <svg viewBox="0 0 20 15" className="mb-[3px] h-[15px] w-5">
        <g fill="none" stroke="#222" strokeWidth="1.500">
          <path d="M1 5.500a12.700 12.700 0 0 1 18 0M4 8.500a8.500 8.500 0 0 1 12 0M6.800 11a4.500 4.500 0 0 1 6.400 0" />
        </g>
        <circle cx="10" cy="13.300" r="1.500" fill="#222" />
      </svg>
      <svg viewBox="0 0 20 16" className="mb-[2px] ml-[10px] h-4 w-5">
        <g fill="none" stroke="#222" strokeWidth="1.300">
          <path d="M1 5.500h3l4-4v13l-4-4H1zM11 5.500a3.500 3.500 0 0 1 0 5M13.500 3.500a6.500 6.500 0 0 1 0 9M16 1.500a9.500 9.500 0 0 1 0 13" />
        </g>
      </svg>
      <svg viewBox="0 0 20 16" className="mb-[5px] ml-[10px] h-4 w-5">
        <rect x="1.700" y="4.700" width="15" height="10" rx="2" fill="none" stroke="#222" strokeWidth="1.400" />
        <rect x="4" y="7" width="10.500" height="5.500" fill="#222" />
        <path d="M18.500 7.500v4.500" stroke="#222" strokeWidth="2" />
        <path d="M4 0 0 5h3L1 9l5-5.500H3.500L5 0z" fill="#222" />
      </svg>
      <div className="mb-[4px] ml-auto text-right text-[14.600px] leading-5 whitespace-nowrap">
        <div>6:38 PM</div>
        <div>10/18/2023</div>
      </div>
      <svg viewBox="0 0 17 20" className="mr-[26px] mb-px ml-[11px] h-5 w-[17px]">
        <path d="M8.500 0a6 6 0 0 1 6 6v6l2.500 4H0l2.500-4V6a6 6 0 0 1 6-6zM6 17h5a2.500 2.500 0 0 1-5 0z" fill="#1f4e5c" />
      </svg>
    </div>
  );
}

export default function App() {
  return (
    <div className="relative flex h-[1080px] w-[1920px] flex-col overflow-hidden font-['Open_Sans','Noto_Sans_CJK_JP',sans-serif]">
      <div className="flex h-[1020px] flex-col border-x-[6px] border-t-[6px] border-[#8ac220]">
        <TabStrip />
        <AddressRow />
        <BookmarkBar />
        <InfoBar />
        <CmsHeader />
        <div className="flex grow">
          <Sidebar />
          <Overview />
        </div>
      </div>
      <Taskbar />
      <MeetingToolbar />
      <ShareBanner />
      <ClosingDialog />
      <Toast />
    </div>
  );
}
